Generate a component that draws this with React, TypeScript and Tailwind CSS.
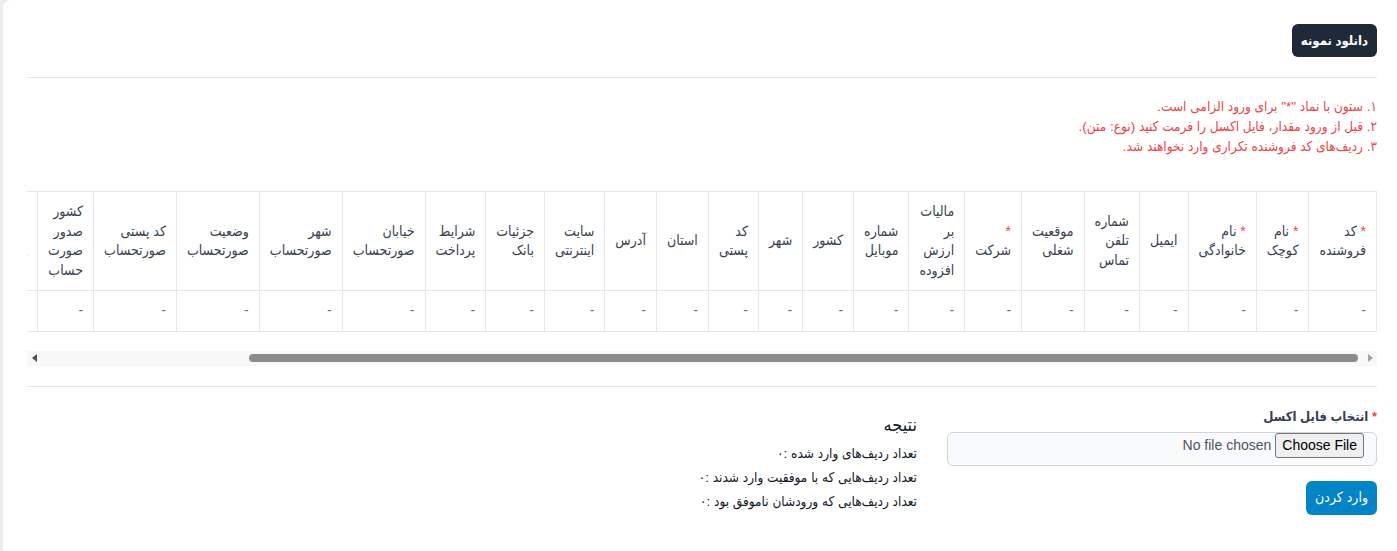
import React from "react";

type Col = { label: string; req?: boolean };

const columns: Col[] = [
  { label: "کد فروشنده", req: true },
  { label: "نام کوچک", req: true },
  { label: "نام خانوادگی", req: true },
  { label: "ایمیل" },
  { label: "شماره تلفن تماس" },
  { label: "موقعیت شغلی" },
  { label: "شرکت", req: true },
  { label: "مالیات بر ارزش افزوده" },
  { label: "شماره موبایل" },
  { label: "کشور" },
  { label: "شهر" },
  { label: "کد پستی" },
  { label: "استان" },
  { label: "آدرس" },
  { label: "سایت اینترنتی" },
  { label: "جزئیات بانک" },
  { label: "شرایط پرداخت" },
  { label: "خیابان صورتحساب" },
  { label: "شهر صورتحساب" },
  { label: "وضعیت صورتحساب" },
  { label: "کد پستی صورتحساب" },
  { label: "کشور صدور صورت حساب" },
  { label: "حجم ارسال کالا" },
  { label: "توضیحات" },
  { label: "نوع مشتری" },
  { label: "کد اقتصادی" },
];

export default function App() {
  return (
    <div className="min-h-screen bg-[#ededed] pl-[3px] font-['Liberation_Sans','DejaVu_Sans_Condensed',sans-serif]">
      <div dir="rtl" className="min-h-screen rounded-tl-lg bg-white pt-6 pl-6 pr-5 pb-8">
        {/* top */}
        <div className="flex">
          <button className="h-[33px] rounded-md bg-[#1f2937] px-[9px] text-[13px] font-bold text-white">
            دانلود نمونه
          </button>
        </div>
        <div className="mt-5 border-t border-[#e8e8e8]" />

        <div className="mt-[19px] text-[13.5px] leading-[20px] text-[#ef4444]">
          <p>۱. ستون با نماد "*" برای ورود الزامی است.</p>
          <p>۲. قبل از ورود مقدار، فایل اکسل را فرمت کنید (نوع: متن).</p>
          <p>۳. ردیف‌های کد فروشنده تکراری وارد نخواهند شد.</p>
        </div>

        {/* table */}
        <div className="mt-[34px] overflow-hidden">
          <table className="w-full border-collapse border border-[#e5e7eb] text-[14px] leading-[19.5px]">
            <thead>
              <tr>
                {columns.map((c) => (
                  <th
                    key={c.label}
                    className="border border-[#e5e7eb] px-[10px] py-[10px] text-right align-middle font-normal text-[#374151]"
                  >
                    {c.req && <span className="text-[#ef4444]">*</span>}
                    {c.req && " "}
                    {c.label}
                  </th>
                ))}
              </tr>
            </thead>
            <tbody>
              <tr>
                {columns.map((c) => (
                  <td
                    key={c.label}
                    className="border border-[#e5e7eb] px-[10px] py-[10px] text-right text-[#6b7280]"
                  >
                    -
                  </td>
                ))}
              </tr>
            </tbody>
          </table>
        </div>

        {/* fake horizontal scrollbar */}
        <div dir="ltr" className="mt-[19px] flex h-[15px] items-center bg-[#f8f8f8]">
          <div className="flex h-full w-[15px] items-center justify-center">
            <svg width="6" height="8" viewBox="0 0 6 8">
              <path d="M5 0 L0 4 L5 8 Z" fill="#505050" />
            </svg>
          </div>
          <div className="flex h-full flex-1 items-center justify-end pr-[4px]">
            <div className="h-[8px] w-[1109px] rounded-full bg-[#8c8c8c]" />
          </div>
          <div className="flex h-full w-[15px] items-center justify-center">
            <svg width="6" height="8" viewBox="0 0 6 8">
              <path d="M1 0 L6 4 L1 8 Z" fill="#a3a3a3" />
            </svg>
          </div>
        </div>

        <div className="mt-5 border-t border-[#e8e8e8]" />

        {/* bottom */}
        <div className="mt-[21px] grid grid-cols-3 gap-x-[30px]">
          <div>
            <label className="block text-[13px] font-bold leading-[18px] text-[#374151]">
              <span className="text-[#ef4444]">*</span> انتخاب فایل اکسل
            </label>
            <input
              type="file"
              className="mt-[6px] block h-[34px] w-full rounded-md border border-[#d1d5db] bg-[#f9fafb] px-[12px] text-[14px] text-[#4b5563] file:me-[4px] file:rounded-[3px] file:border file:border-[#767676] file:bg-[#efefef] file:px-[6px] file:py-[1px] file:text-[14px] file:text-black"
            />
            <button className="mt-[15px] h-[34px] rounded-md bg-[#0284c7] px-[9px] text-[14px] text-white">
              وارد کردن
            </button>
          </div>
          <div className="pt-[4px] text-[#111827]">
            <h3 className="text-[18px] font-normal leading-[27px]">نتیجه</h3>
            <div className="mt-[3px] text-[13.5px] leading-[24px]">
              <p>تعداد ردیف‌های وارد شده :۰</p>
              <p>تعداد ردیف‌هایی که با موفقیت وارد شدند :۰</p>
              <p>تعداد ردیف‌هایی که ورودشان ناموفق بود :۰</p>
            </div>
          </div>
          <div />
        </div>
      </div>
    </div>
  );
}
